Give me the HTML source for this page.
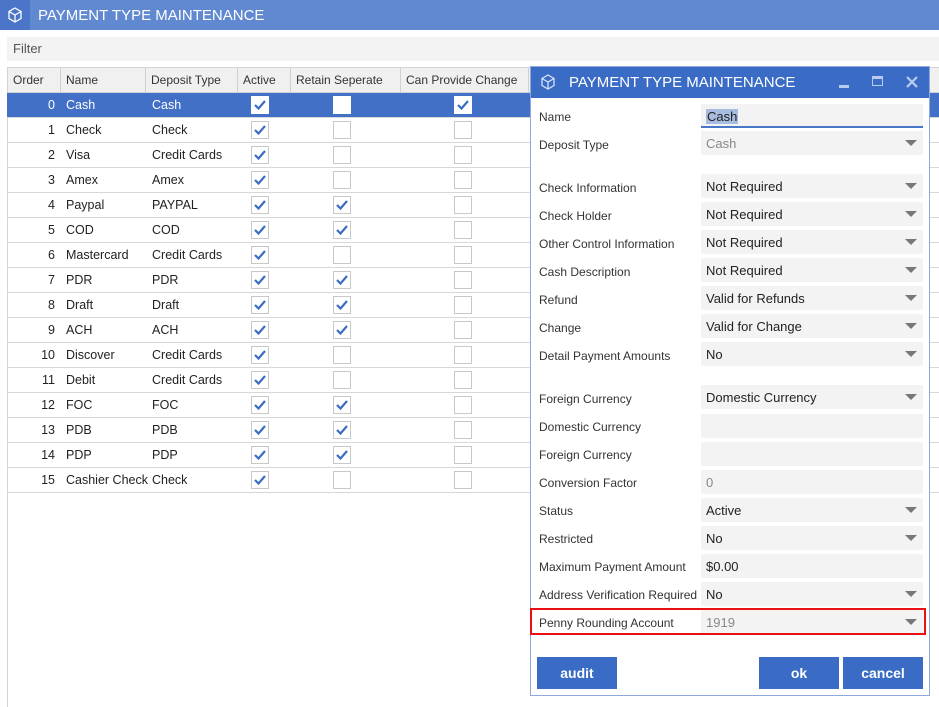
<!DOCTYPE html>
<html><head><meta charset="utf-8"><style>
*{margin:0;padding:0;box-sizing:border-box}
body{width:939px;height:705px;overflow:hidden;background:#fff;font-family:"Liberation Sans",sans-serif;font-size:12px;color:#222;position:relative}
.a{position:absolute}
.top{left:0;top:0;width:939px;height:30px;background:#6189d2;color:#fff;font-size:15px}
.top .ic{left:0;top:0;width:30px;height:30px;background:#4b75c8}
.filter{left:7px;top:37px;width:932px;height:24px;background:#f3f3f3;color:#555;font-size:13px;padding:4px 6px}
.grid{left:7px;top:67px;width:932px;height:640px;border-left:1px solid #d4d4d4;border-top:1px solid #d4d4d4}
.hdr{left:0;top:0;width:932px;height:25px;background:#f0f0f0;border-bottom:1px solid #d0d0d0}
.hdr div{position:absolute;top:0;height:25px;line-height:25px;padding-left:5px;border-right:1px solid #d0d0d0;font-size:12px;color:#333}
.row{position:absolute;left:0;width:932px;height:25px;border-bottom:1px solid #d8d8d8;font-size:12.5px}
.row span{position:absolute;top:0;line-height:24px}
.sel{background:#4170c6;color:#fff}
.cb{position:absolute;top:3px;width:18px;height:18px;border:1px solid #c8c8c8;background:#fff}
.cb svg{position:absolute;left:2px;top:3px}
.dlg{left:530px;top:66px;width:400px;height:630px;background:#fff;border:1px solid #8fa9dc}
.dh{left:0;top:0;width:398px;height:31px;background:#3a6cc6;color:#fff;font-size:15px}
.lb{position:absolute;left:8px;font-size:12px;color:#333;white-space:nowrap}
.fd{position:absolute;left:170px;width:222px;height:24px;background:#f3f3f3;font-size:13px;line-height:25px;padding-left:5px;color:#222}
.fd.g{color:#888}
.fd .ar{position:absolute;right:6px;top:9px;width:0;height:0;border-left:6px solid transparent;border-right:6px solid transparent;border-top:6px solid #777}
.btn{position:absolute;top:590px;width:80px;height:32px;background:#3a6cc6;color:#fff;font-weight:bold;font-size:14px;text-align:center;line-height:32px}
</style></head><body>
<div class="a top"><div class="a ic"><svg width="30" height="30"><path d="M15 8l6 3.5v7L15 22l-6-3.5v-7z M9 11.5l6 3.5 6-3.5 M15 15v7" fill="none" stroke="#fff" stroke-width="1.3"/></svg></div><div class="a" style="left:38px;top:7px">PAYMENT TYPE MAINTENANCE</div></div>
<div class="a filter">Filter</div>
<div class="a grid">
<div class="a hdr">
<div style="left:0;width:53px">Order</div><div style="left:53px;width:85px">Name</div><div style="left:138px;width:92px">Deposit Type</div><div style="left:230px;width:53px">Active</div><div style="left:283px;width:110px">Retain Seperate</div><div style="left:393px;width:128px">Can Provide Change</div>
</div>
</div>
<div class="a" style="left:7px;top:93px;width:932px;height:400px" id="rows">
<div class="row sel" style="top:0"><span style="right:884px">0</span><span style="left:59px">Cash</span><span style="left:145px">Cash</span><div class="cb" style="left:244px;border-color:#fff"><svg width="12" height="10"><path d="M1 5l3.5 3.5L11 1" fill="none" stroke="#3a6cc6" stroke-width="2.2"/></svg></div><div class="cb" style="left:326px;border-color:#fff"></div><div class="cb" style="left:447px;border-color:#fff"><svg width="12" height="10"><path d="M1 5l3.5 3.5L11 1" fill="none" stroke="#3a6cc6" stroke-width="2.2"/></svg></div></div>
<div class="row" style="top:25px"><span style="right:884px">1</span><span style="left:59px">Check</span><span style="left:145px">Check</span><div class="cb" style="left:244px"><svg width="12" height="10"><path d="M1 5l3.5 3.5L11 1" fill="none" stroke="#3a6cc6" stroke-width="2.2"/></svg></div><div class="cb" style="left:326px"></div><div class="cb" style="left:447px"></div></div>
<div class="row" style="top:50px"><span style="right:884px">2</span><span style="left:59px">Visa</span><span style="left:145px">Credit Cards</span><div class="cb" style="left:244px"><svg width="12" height="10"><path d="M1 5l3.5 3.5L11 1" fill="none" stroke="#3a6cc6" stroke-width="2.2"/></svg></div><div class="cb" style="left:326px"></div><div class="cb" style="left:447px"></div></div>
<div class="row" style="top:75px"><span style="right:884px">3</span><span style="left:59px">Amex</span><span style="left:145px">Amex</span><div class="cb" style="left:244px"><svg width="12" height="10"><path d="M1 5l3.5 3.5L11 1" fill="none" stroke="#3a6cc6" stroke-width="2.2"/></svg></div><div class="cb" style="left:326px"></div><div class="cb" style="left:447px"></div></div>
<div class="row" style="top:100px"><span style="right:884px">4</span><span style="left:59px">Paypal</span><span style="left:145px">PAYPAL</span><div class="cb" style="left:244px"><svg width="12" height="10"><path d="M1 5l3.5 3.5L11 1" fill="none" stroke="#3a6cc6" stroke-width="2.2"/></svg></div><div class="cb" style="left:326px"><svg width="12" height="10"><path d="M1 5l3.5 3.5L11 1" fill="none" stroke="#3a6cc6" stroke-width="2.2"/></svg></div><div class="cb" style="left:447px"></div></div>
<div class="row" style="top:125px"><span style="right:884px">5</span><span style="left:59px">COD</span><span style="left:145px">COD</span><div class="cb" style="left:244px"><svg width="12" height="10"><path d="M1 5l3.5 3.5L11 1" fill="none" stroke="#3a6cc6" stroke-width="2.2"/></svg></div><div class="cb" style="left:326px"><svg width="12" height="10"><path d="M1 5l3.5 3.5L11 1" fill="none" stroke="#3a6cc6" stroke-width="2.2"/></svg></div><div class="cb" style="left:447px"></div></div>
<div class="row" style="top:150px"><span style="right:884px">6</span><span style="left:59px">Mastercard</span><span style="left:145px">Credit Cards</span><div class="cb" style="left:244px"><svg width="12" height="10"><path d="M1 5l3.5 3.5L11 1" fill="none" stroke="#3a6cc6" stroke-width="2.2"/></svg></div><div class="cb" style="left:326px"></div><div class="cb" style="left:447px"></div></div>
<div class="row" style="top:175px"><span style="right:884px">7</span><span style="left:59px">PDR</span><span style="left:145px">PDR</span><div class="cb" style="left:244px"><svg width="12" height="10"><path d="M1 5l3.5 3.5L11 1" fill="none" stroke="#3a6cc6" stroke-width="2.2"/></svg></div><div class="cb" style="left:326px"><svg width="12" height="10"><path d="M1 5l3.5 3.5L11 1" fill="none" stroke="#3a6cc6" stroke-width="2.2"/></svg></div><div class="cb" style="left:447px"></div></div>
<div class="row" style="top:200px"><span style="right:884px">8</span><span style="left:59px">Draft</span><span style="left:145px">Draft</span><div class="cb" style="left:244px"><svg width="12" height="10"><path d="M1 5l3.5 3.5L11 1" fill="none" stroke="#3a6cc6" stroke-width="2.2"/></svg></div><div class="cb" style="left:326px"><svg width="12" height="10"><path d="M1 5l3.5 3.5L11 1" fill="none" stroke="#3a6cc6" stroke-width="2.2"/></svg></div><div class="cb" style="left:447px"></div></div>
<div class="row" style="top:225px"><span style="right:884px">9</span><span style="left:59px">ACH</span><span style="left:145px">ACH</span><div class="cb" style="left:244px"><svg width="12" height="10"><path d="M1 5l3.5 3.5L11 1" fill="none" stroke="#3a6cc6" stroke-width="2.2"/></svg></div><div class="cb" style="left:326px"><svg width="12" height="10"><path d="M1 5l3.5 3.5L11 1" fill="none" stroke="#3a6cc6" stroke-width="2.2"/></svg></div><div class="cb" style="left:447px"></div></div>
<div class="row" style="top:250px"><span style="right:884px">10</span><span style="left:59px">Discover</span><span style="left:145px">Credit Cards</span><div class="cb" style="left:244px"><svg width="12" height="10"><path d="M1 5l3.5 3.5L11 1" fill="none" stroke="#3a6cc6" stroke-width="2.2"/></svg></div><div class="cb" style="left:326px"></div><div class="cb" style="left:447px"></div></div>
<div class="row" style="top:275px"><span style="right:884px">11</span><span style="left:59px">Debit</span><span style="left:145px">Credit Cards</span><div class="cb" style="left:244px"><svg width="12" height="10"><path d="M1 5l3.5 3.5L11 1" fill="none" stroke="#3a6cc6" stroke-width="2.2"/></svg></div><div class="cb" style="left:326px"></div><div class="cb" style="left:447px"></div></div>
<div class="row" style="top:300px"><span style="right:884px">12</span><span style="left:59px">FOC</span><span style="left:145px">FOC</span><div class="cb" style="left:244px"><svg width="12" height="10"><path d="M1 5l3.5 3.5L11 1" fill="none" stroke="#3a6cc6" stroke-width="2.2"/></svg></div><div class="cb" style="left:326px"><svg width="12" height="10"><path d="M1 5l3.5 3.5L11 1" fill="none" stroke="#3a6cc6" stroke-width="2.2"/></svg></div><div class="cb" style="left:447px"></div></div>
<div class="row" style="top:325px"><span style="right:884px">13</span><span style="left:59px">PDB</span><span style="left:145px">PDB</span><div class="cb" style="left:244px"><svg width="12" height="10"><path d="M1 5l3.5 3.5L11 1" fill="none" stroke="#3a6cc6" stroke-width="2.2"/></svg></div><div class="cb" style="left:326px"><svg width="12" height="10"><path d="M1 5l3.5 3.5L11 1" fill="none" stroke="#3a6cc6" stroke-width="2.2"/></svg></div><div class="cb" style="left:447px"></div></div>
<div class="row" style="top:350px"><span style="right:884px">14</span><span style="left:59px">PDP</span><span style="left:145px">PDP</span><div class="cb" style="left:244px"><svg width="12" height="10"><path d="M1 5l3.5 3.5L11 1" fill="none" stroke="#3a6cc6" stroke-width="2.2"/></svg></div><div class="cb" style="left:326px"><svg width="12" height="10"><path d="M1 5l3.5 3.5L11 1" fill="none" stroke="#3a6cc6" stroke-width="2.2"/></svg></div><div class="cb" style="left:447px"></div></div>
<div class="row" style="top:375px"><span style="right:884px">15</span><span style="left:59px">Cashier Check</span><span style="left:145px">Check</span><div class="cb" style="left:244px"><svg width="12" height="10"><path d="M1 5l3.5 3.5L11 1" fill="none" stroke="#3a6cc6" stroke-width="2.2"/></svg></div><div class="cb" style="left:326px"></div><div class="cb" style="left:447px"></div></div>
</div>

<div class="a dlg">
<div class="a dh"><svg class="a" style="left:6px;top:4px" width="22" height="22"><path d="M11 4l6 3.5v7L11 18l-6-3.5v-7z M5 7.5l6 3.5 6-3.5 M11 11v7" fill="none" stroke="#d8e2f5" stroke-width="1.3"/></svg><div class="a" style="left:38px;top:7px">PAYMENT TYPE MAINTENANCE</div>
<div class="a" style="left:308px;top:18px;width:10px;height:3px;background:#b9cbef"></div>
<div class="a" style="left:341px;top:9px;width:11px;height:10px;border:1px solid #b9cbef;border-top-width:3px"></div>
<svg class="a" style="left:375px;top:9px" width="12" height="12"><path d="M1 1l10 10M11 1l-10 10" stroke="#b9cbef" stroke-width="2.2"/></svg></div>

<div class="lb" style="top:43px">Name</div>
<div class="fd" style="top:37px;border-bottom:2px solid #4a78c8"><span style="background:#a9bde0;padding:0 1px">Cash</span></div>
<div class="lb" style="top:71px">Deposit Type</div><div class="fd g" style="top:64px">Cash<div class="ar"></div></div>

<div class="lb" style="top:114px">Check Information</div><div class="fd" style="top:107px">Not Required<div class="ar"></div></div>
<div class="lb" style="top:142px">Check Holder</div><div class="fd" style="top:135px">Not Required<div class="ar"></div></div>
<div class="lb" style="top:170px">Other Control Information</div><div class="fd" style="top:163px">Not Required<div class="ar"></div></div>
<div class="lb" style="top:198px">Cash Description</div><div class="fd" style="top:191px">Not Required<div class="ar"></div></div>
<div class="lb" style="top:226px">Refund</div><div class="fd" style="top:219px">Valid for Refunds<div class="ar"></div></div>
<div class="lb" style="top:254px">Change</div><div class="fd" style="top:247px">Valid for Change<div class="ar"></div></div>
<div class="lb" style="top:282px">Detail Payment Amounts</div><div class="fd" style="top:275px">No<div class="ar"></div></div>

<div class="lb" style="top:325px">Foreign Currency</div><div class="fd" style="top:318px">Domestic Currency<div class="ar"></div></div>
<div class="lb" style="top:353px">Domestic Currency</div><div class="fd" style="top:347px"></div>
<div class="lb" style="top:381px">Foreign Currency</div><div class="fd" style="top:375px"></div>
<div class="lb" style="top:409px">Conversion Factor</div><div class="fd g" style="top:403px">0</div>
<div class="lb" style="top:437px">Status</div><div class="fd" style="top:431px">Active<div class="ar"></div></div>
<div class="lb" style="top:465px">Restricted</div><div class="fd" style="top:459px">No<div class="ar"></div></div>
<div class="lb" style="top:493px">Maximum Payment Amount</div><div class="fd" style="top:487px">$0.00</div>
<div class="lb" style="top:521px">Address Verification Required</div><div class="fd" style="top:515px">No<div class="ar"></div></div>
<div class="lb" style="top:549px">Penny Rounding Account</div><div class="fd g" style="top:543px">1919<div class="ar"></div></div>
<div class="a" style="left:-1px;top:541px;width:396px;height:27px;border:2px solid #e81010"></div>

<div class="btn" style="left:6px">audit</div>
<div class="btn" style="left:228px">ok</div>
<div class="btn" style="left:312px">cancel</div>
</div>
</body></html>
